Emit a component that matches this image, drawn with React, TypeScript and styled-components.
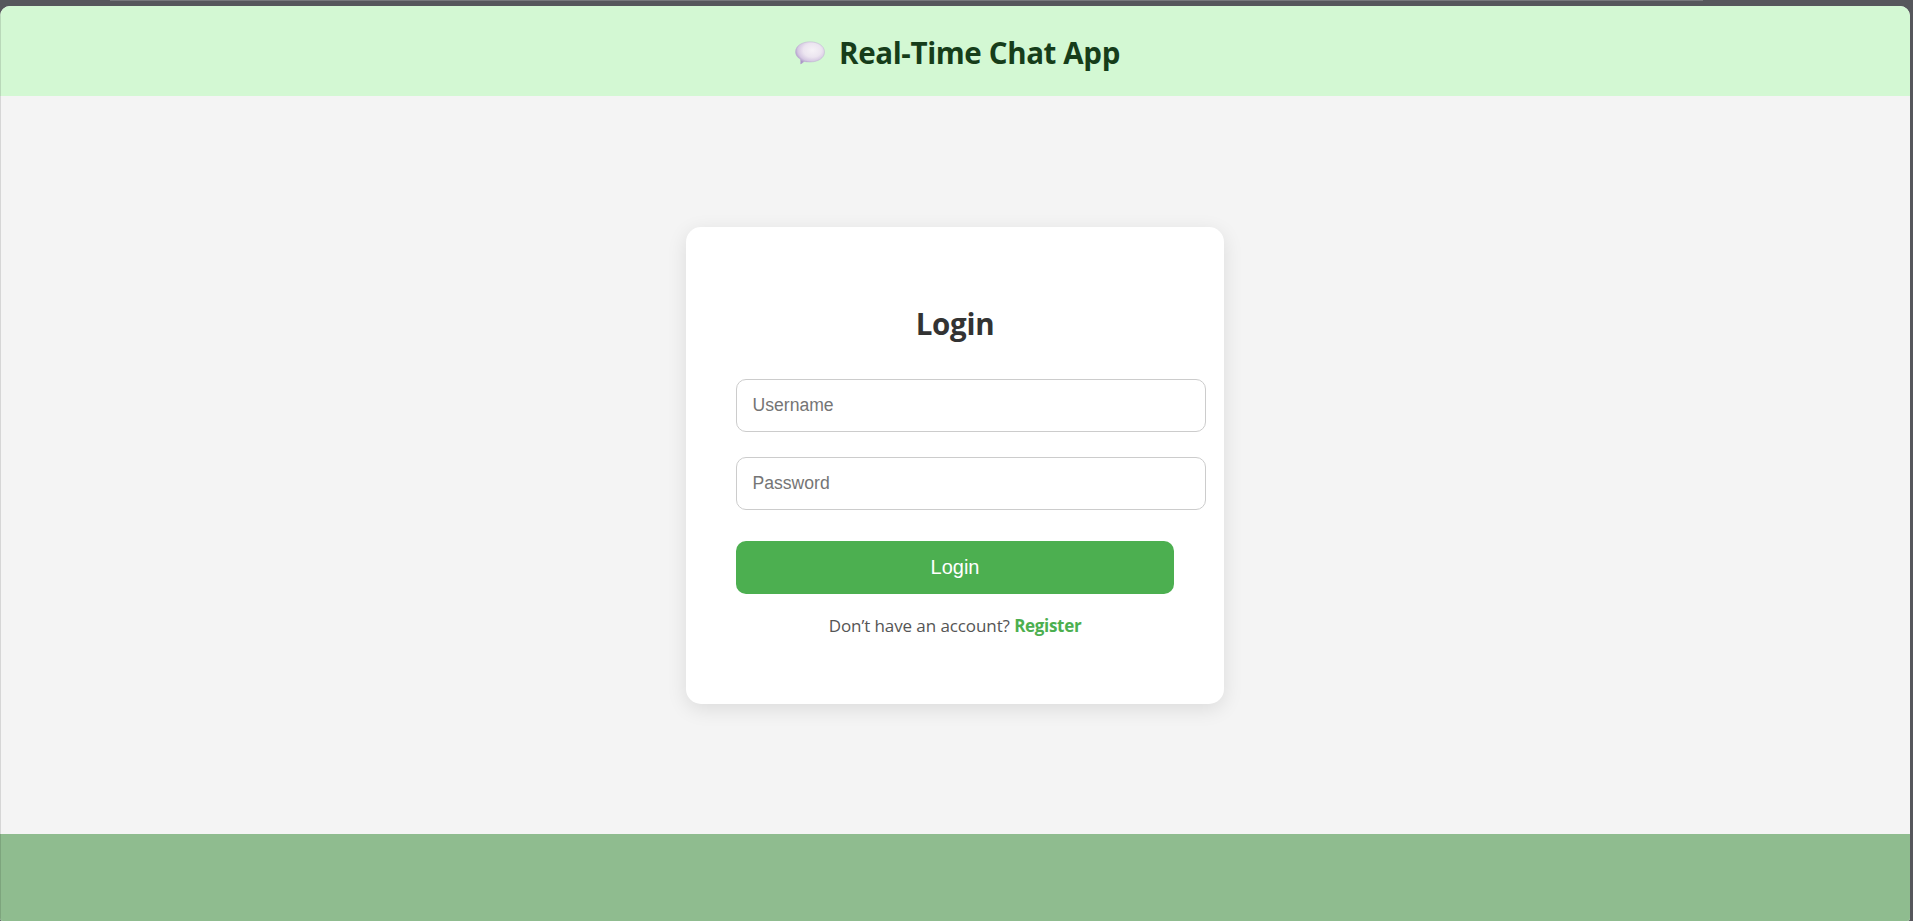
import React from "react";
import styled, { createGlobalStyle } from "styled-components";

const GlobalStyle = createGlobalStyle`
  body { margin: 0; overflow: hidden; background: #56575c; }
  *, *::before, *::after { box-sizing: border-box; }
`;

const Frame = styled.div`
  display: flex;
  flex-direction: column;
  height: 100vh;
  padding-right: 3px;
  background: #56575c;
  font-family: "Open Sans", "Noto Sans", sans-serif;
`;

const TopEdge = styled.div`
  flex: none;
  height: 6px;
  padding: 0 207px 0 110px;
  &::before {
    content: "";
    display: block;
    height: 1px;
    background: #77787c;
  }
`;

const Page = styled.div`
  position: relative;
  flex: 1;
  display: flex;
  flex-direction: column;
  overflow: hidden;
  border-radius: 10px 10px 3px 3px;
  background: #f4f4f4;
  &::after {
    content: "";
    position: absolute;
    inset: 0 auto 0 0;
    width: 1px;
    background: rgba(0, 0, 0, 0.12);
  }
`;

const Header = styled.header`
  flex: none;
  display: flex;
  align-items: center;
  justify-content: center;
  gap: 14px;
  height: 90px;
  padding: 3px 0 0 5px;
  background: #d3f8d3;
  color: #163d1a;
`;

const Title = styled.h1`
  margin: 0;
  font-size: 29.5px;
  line-height: 40px;
  font-weight: 700;
  white-space: nowrap;
  letter-spacing: -0.37px;
`;

const Main = styled.main`
  flex: 1;
  display: flex;
  align-items: center;
  justify-content: center;
`;

const Card = styled.form`
  display: flex;
  flex-direction: column;
  width: 538px;
  height: 477px;
  padding: 75px 50px 0;
  border-radius: 15px;
  background: #fff;
  box-shadow: 0 5px 20px rgba(0, 0, 0, 0.1);
`;

const CardTitle = styled.h2`
  margin: 0 0 33px;
  font-size: 29.5px;
  line-height: 44px;
  font-weight: 700;
  text-align: center;
  letter-spacing: -0.25px;
  color: #333;
`;

const Field = styled.input`
  flex: none;
  width: 470px;
  height: 53px;
  margin-bottom: 25px;
  padding: 0 15.5px;
  border: 1px solid #ccc;
  border-radius: 10px;
  background: #fff;
  font: 17.6px "Liberation Sans", Arial, sans-serif;
  &::placeholder { color: #757575; opacity: 1; }
`;

const Submit = styled.button`
  height: 53px;
  margin: 6px 0 0;
  padding: 0;
  border: 0;
  border-radius: 10px;
  background: #4caf50;
  color: #fff;
  font: 20px "Liberation Sans", Arial, sans-serif;
`;

const Prompt = styled.p`
  margin: 19px 0 0;
  font-size: 17px;
  line-height: 26px;
  text-align: center;
  white-space: nowrap;
  letter-spacing: -0.09px;
  color: #555;
`;

const Register = styled.a`
  font-weight: 700;
  letter-spacing: -0.32px;
  color: #4caf50;
`;

const Footer = styled.footer`
  flex: none;
  height: 87px;
  background: #8fbc8f;
`;

const Bubble = () => (
  <svg width="30" height="24" viewBox="0 0 30 24" aria-hidden="true">
    <defs>
      <radialGradient id="bubble" cx="0.58" cy="0.38" r="0.62">
        <stop offset="0" stopColor="#f6f2f7" />
        <stop offset="0.5" stopColor="#ece5f0" />
        <stop offset="0.8" stopColor="#d5c8e2" />
        <stop offset="1" stopColor="#ac98c8" />
      </radialGradient>
    </defs>
    <path
      d="M15 .8C23 .8 29.5 5 29.5 11C29.5 17 23 21 15 21C12.6 21 10.6 20.8 9 20.4C8.1 21.6 6.9 22.6 5.5 23C5.7 21.5 5.7 19.8 5.4 18.2C2.3 16.4.5 13.8.5 11C.5 5 7 .8 15 .8Z"
      fill="url(#bubble)"
      stroke="#b9a9d0"
      strokeWidth="0.4"
    />
  </svg>
);

export default function App() {
  return (
    <Frame>
      <GlobalStyle />
      <TopEdge />
      <Page>
        <Header>
          <Bubble />
          <Title>Real-Time Chat App</Title>
        </Header>
        <Main>
          <Card onSubmit={(e) => e.preventDefault()}>
            <CardTitle>Login</CardTitle>
            <Field placeholder="Username" />
            <Field type="password" placeholder="Password" />
            <Submit>Login</Submit>
            <Prompt>
              Don’t have an account? <Register>Register</Register>
            </Prompt>
          </Card>
        </Main>
        <Footer />
      </Page>
    </Frame>
  );
}
